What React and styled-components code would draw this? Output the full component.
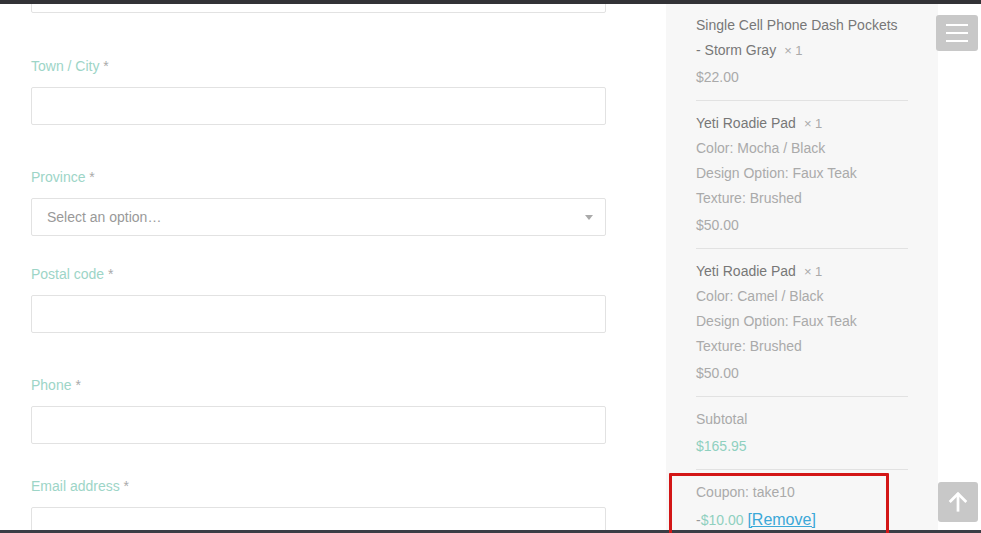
import styled, { createGlobalStyle } from 'styled-components'

const GlobalStyle = createGlobalStyle`
    html, body {
        margin: 0;
        padding: 0;
        background: #fff;
        font-family: "Liberation Sans", Arial, sans-serif;
        font-size: 14px;
    }
`

const App = () => {
    return (
        <Page>
            <GlobalStyle />
            <TopBar />
            <Main>
                <FormColumn>
                    <Input style={{ marginTop: -29 }} />
                    {fields.map(field => (
                        <Field key={field.id} space={field.space}>
                            <Label>
                                {field.title} <Star>*</Star>
                            </Label>
                            {field.select ? (
                                <Select>
                                    Select an option…
                                    <Caret />
                                </Select>
                            ) : (
                                <Input />
                            )}
                        </Field>
                    ))}
                </FormColumn>
                <Sidebar>
                    {items.map(item => (
                        <Item key={item.id}>
                            <ItemName>
                                {item.name}
                                {item.variant && <> <NoWrap>- {item.variant}</NoWrap></>}
                                <Qty>× 1</Qty>
                            </ItemName>
                            {item.meta.map(m => (
                                <Meta key={m[0]}>
                                    {m[0]}: {m[1]}
                                </Meta>
                            ))}
                            <Price>{item.price}</Price>
                        </Item>
                    ))}
                    <Item>
                        <Meta>Subtotal</Meta>
                        <Price accent>$165.95</Price>
                    </Item>
                    <Item last>
                        <Meta>Coupon: take10</Meta>
                        <CouponLine>
                            -<Accent>$10.00</Accent> <RemoveLink href="#">[Remove]</RemoveLink>
                        </CouponLine>
                    </Item>
                </Sidebar>
            </Main>
            <BottomBar />
            <Highlight />
            <MenuButton>
                <span />
                <span />
                <span />
            </MenuButton>
            <TopButton>
                <svg width="22" height="22" viewBox="0 0 24 24" fill="none" stroke="#fff" strokeWidth="3" strokeLinecap="square">
                    <path d="M12 21V4" />
                    <path d="M4 11l8-8 8 8" />
                </svg>
            </TopButton>
        </Page>
    )
}

const Page = styled.div`
    position: relative;
    width: 981px;
    height: 533px;
    overflow: hidden;
    display: flex;
    flex-direction: column;
`

const TopBar = styled.div`
    height: 4px;
    background: #323236;
    flex-shrink: 0;
`

const BottomBar = styled.div`
    height: 3px;
    background: #3a3d45;
    flex-shrink: 0;
`

const Main = styled.div`
    flex: 1;
    display: flex;
    overflow: hidden;
`

const FormColumn = styled.div`
    width: 575px;
    padding-left: 31px;
    padding-right: 60px;
    display: flex;
    flex-direction: column;
`

const Field = styled.div`
    margin-top: ${props => props.space}px;
    display: flex;
    flex-direction: column;
    gap: 11px;
`

const Label = styled.div`
    line-height: 20px;
    color: #9dd5c7;
`

const Star = styled.span`
    color: #aaa;
`

const Input = styled.div`
    height: 36px;
    flex-shrink: 0;
    border: 1px solid #e2e2e2;
    border-radius: 2px;
    background: #fff;
`

const Select = styled(Input)`
    position: relative;
    display: flex;
    align-items: center;
    padding-left: 15px;
    color: #999;
`

const Caret = styled.span`
    position: absolute;
    right: 12px;
    top: 16px;
    border-left: 4px solid transparent;
    border-right: 4px solid transparent;
    border-top: 5px solid #aaa;
`

const Sidebar = styled.div`
    width: 212px;
    padding: 9px 30px 0;
    background: #f7f7f7;
    flex-shrink: 0;
`

const Item = styled.div`
    padding-bottom: 8px;
    margin-bottom: 10px;
    border-bottom: ${props => (props.last ? 'none' : '1px solid #e2e2e2')};
    line-height: 25px;
`

const ItemName = styled.div`
    color: #777;
`

const NoWrap = styled.span`
    white-space: nowrap;
`

const Qty = styled.span`
    color: #aaa;
    font-size: 13px;
    margin-left: 8px;
`

const Meta = styled.div`
    color: #aaa;
`

const Price = styled.div`
    color: ${props => (props.accent ? '#8fd0bf' : '#aaa')};
    line-height: 29px;
`

const CouponLine = styled.div`
    color: #999;
    line-height: 29px;
`

const Accent = styled.span`
    color: #8fd0bf;
`

const RemoveLink = styled.a`
    color: #3ba8d8;
    font-size: 16px;
    text-decoration: underline;
`

const Highlight = styled.div`
    position: absolute;
    left: 669px;
    top: 473px;
    width: 214px;
    height: 80px;
    border: 3px solid #d31616;
    border-radius: 1px;
    pointer-events: none;
`

const SquareButton = styled.div`
    position: absolute;
    background: #c8c8c8;
    border-radius: 3px;
    display: flex;
    align-items: center;
    justify-content: center;
`

const MenuButton = styled(SquareButton)`
    left: 936px;
    top: 15px;
    width: 42px;
    height: 36px;
    flex-direction: column;
    gap: 6px;

    span {
        display: block;
        width: 22px;
        height: 2px;
        background: #fff;
    }
`

const TopButton = styled(SquareButton)`
    left: 938px;
    top: 482px;
    width: 40px;
    height: 40px;
`

export default App

const fields = [
    { id: '1', title: 'Town / City', space: 43 },
    { id: '2', title: 'Province', space: 42, select: true },
    { id: '3', title: 'Postal code', space: 28 },
    { id: '4', title: 'Phone', space: 42 },
    { id: '5', title: 'Email address', space: 32 }
]

const items = [
    {
        id: '1',
        name: 'Single Cell Phone Dash Pockets',
        variant: 'Storm Gray',
        meta: [],
        price: '$22.00'
    },
    {
        id: '2',
        name: 'Yeti Roadie Pad',
        meta: [['Color', 'Mocha / Black'], ['Design Option', 'Faux Teak'], ['Texture', 'Brushed']],
        price: '$50.00'
    },
    {
        id: '3',
        name: 'Yeti Roadie Pad',
        meta: [['Color', 'Camel / Black'], ['Design Option', 'Faux Teak'], ['Texture', 'Brushed']],
        price: '$50.00'
    }
]
